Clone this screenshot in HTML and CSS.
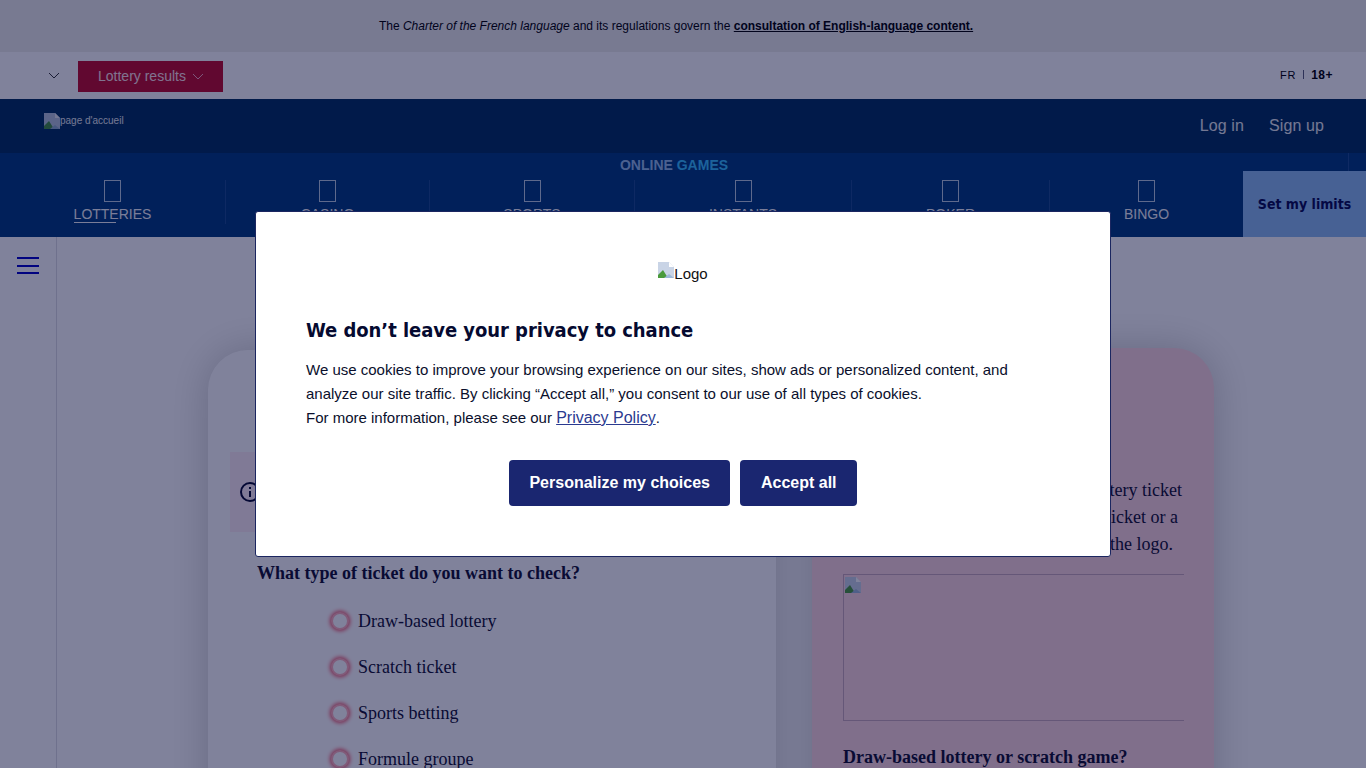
FILE: index.html
```html
<!DOCTYPE html>
<html lang="en">
<head>
    <meta charset="UTF-8">
    <meta name="viewport" content="width=device-width, initial-scale=1.0">
    <title>Check your ticket</title>
    <link rel="stylesheet" href="styles.css">
</head>
<body>
    <div class="notice">
        <p>The <em>Charter of the French language</em> and its regulations govern the <a href="#">consultation of English-language content.</a></p>
    </div>

    <div class="util-bar">
        <svg class="chevron chevron-dark" viewBox="0 0 12 7"><path d="M1 1l5 5 5-5"/></svg>
        <a class="results-button" href="#">Lottery results
            <svg class="chevron chevron-pink" viewBox="0 0 12 7"><path d="M1 1l5 5 5-5"/></svg>
        </a>
        <div class="util-right">
            <a href="#">FR</a>
            <span class="util-sep"></span>
            <strong>18+</strong>
        </div>
    </div>

    <header class="site-header">
        <a class="home-link" href="#">
            <svg class="broken-img" viewBox="0 0 16 16"><use href="#broken"/></svg>page d'accueil
        </a>
        <div class="account-links">
            <a href="#">Log in</a>
            <a href="#">Sign up</a>
        </div>
    </header>

    <nav class="games-nav">
        <div class="games-title"><span>ONLINE</span> <b>GAMES</b></div>
        <span class="title-tick"></span>
        <div class="games-row">
            <a class="game current" href="#"><i class="tofu"></i><span>LOTTERIES</span></a>
            <a class="game" href="#"><i class="tofu"></i><span>CASINO</span></a>
            <a class="game" href="#"><i class="tofu"></i><span>SPORTS</span></a>
            <a class="game" href="#"><i class="tofu"></i><span>INSTANTS</span></a>
            <a class="game" href="#"><i class="tofu"></i><span>POKER</span></a>
            <a class="game" href="#"><i class="tofu"></i><span>BINGO</span></a>
            <a class="limits" href="#">Set my limits</a>
        </div>
    </nav>

    <div class="page-body">
        <aside class="side-rail">
            <button class="burger" aria-label="Menu"><span></span><span></span><span></span></button>
        </aside>
        <main class="cards">
            <section class="card card-form">
                <div class="info-box">
                    <svg class="info-icon" viewBox="0 0 20 20">
                        <circle cx="10" cy="10" r="9"/>
                        <path d="M10 9v6M10 5v2"/>
                    </svg>
                    <span>Results are available after each draw.</span>
                </div>
                <h3>What type of ticket do you want to check?</h3>
                <ul class="ticket-types">
                    <li><i class="radio"></i>Draw-based lottery</li>
                    <li><i class="radio"></i>Scratch ticket</li>
                    <li><i class="radio"></i>Sports betting</li>
                    <li><i class="radio"></i>Formule groupe</li>
                </ul>
            </section>
            <section class="card card-help">
                <p>
                    <span class="help-line">Scan the barcode of your lottery ticket</span>
                    <span class="help-line line-two">to check a winning ticket or a</span>
                    <span class="help-line line-three">game with the logo.</span>
                </p>
                <div class="help-image">
                    <svg class="broken-img" viewBox="0 0 16 16"><use href="#broken"/></svg>
                </div>
                <h3>Draw-based lottery or scratch game?</h3>
            </section>
        </main>
    </div>

    <div class="overlay">
        <div class="cookie-modal" role="dialog">
            <div class="modal-logo">
                <svg class="broken-img" viewBox="0 0 16 16"><use href="#broken"/></svg>Logo
            </div>
            <h2>We don’t leave your privacy to chance</h2>
            <p>We use cookies to improve your browsing experience on our sites, show ads or personalized content, and analyze our site traffic. By clicking “Accept all,” you consent to our use of all types of cookies.<br>
            For more information, please see our <a href="#">Privacy Policy</a>.</p>
            <div class="modal-buttons">
                <button>Personalize my choices</button>
                <button>Accept all</button>
            </div>
        </div>
    </div>

    <svg class="icon-defs" width="0" height="0">
        <symbol id="broken" viewBox="0 0 16 16">
            <path d="M0 0h11l5 5v11H0z" fill="#c9d4e6"/>
            <path d="M11 0l5 5h-5z" fill="#fff"/>
            <path d="M0 16v-3l5-5 5 8z" fill="#4a9a3c"/>
            <path d="M6 16l5-4 5 4z" fill="#9db8d8"/>
        </symbol>
    </svg>
</body>
</html>
```

FILE: styles.css
```css
html, body {
    height: 768px;
    overflow: hidden;
}
body {
    margin: 0;
    font-family: "Liberation Sans", Arial, sans-serif;
    color: #0a0f3c;
    background-color: white;
}
a {
    color: inherit;
    text-decoration: none;
}
.icon-defs {
    position: absolute;
}
.broken-img {
    width: 16px;
    height: 16px;
    flex: none;
}

/* top notice */
.notice {
    height: 52px;
    display: flex;
    align-items: center;
    justify-content: center;
    padding-right: 14px;
    background-color: #eeeeea;
    font-size: 12px;
    color: #000;
}
.notice p {
    margin: 0;
}
.notice a {
    font-weight: bold;
    text-decoration: underline;
}

/* utility bar */
.util-bar {
    height: 47px;
    display: flex;
    align-items: center;
    padding: 0 33px 0 48px;
}
.chevron {
    width: 12px;
    height: 7px;
    fill: none;
    stroke-width: 1;
}
.chevron-dark {
    stroke: #333;
    margin-right: 18px;
}
.chevron-pink {
    stroke: #f8a8bc;
    margin-left: 6px;
}
.results-button {
    width: 145px;
    height: 31px;
    box-sizing: border-box;
    margin-top: 2px;
    padding: 0 0 1px 20px;
    display: flex;
    align-items: center;
    background-color: #c00a28;
    color: #ffe0e6;
    font-size: 14px;
}
.util-right {
    margin: -2px 0 0 auto;
    display: flex;
    align-items: center;
    gap: 7px;
    font-size: 11px;
    color: #000;
    letter-spacing: 0.7px;
}
.util-right strong {
    font-size: 12px;
    letter-spacing: 0.5px;
}
.util-sep {
    width: 1px;
    height: 9px;
    background-color: #5b5e78;
}

/* header */
.site-header {
    height: 54px;
    display: flex;
    justify-content: space-between;
    padding: 14px 42px 0 44px;
    box-sizing: border-box;
    background-color: #002f5c;
}
.home-link {
    display: flex;
    height: 16px;
    line-height: 16px;
    font-size: 10px;
    color: #fff;
    opacity: 0.9;
}
.account-links {
    display: flex;
    gap: 25px;
    font-size: 16px;
    letter-spacing: 0.1px;
    padding-top: 4px;
    color: #ffffff;
    opacity: 0.9;
}

/* games nav */
.games-nav {
    position: relative;
    height: 84px;
    background-color: #003a7c;
}
.games-title {
    height: 18px;
    text-align: center;
    font-size: 14px;
    line-height: 24px;
    font-weight: bold;
    margin-left: -18px;
}
.games-title span {
    color: #95bde8;
}
.games-title b {
    color: #36c0ff;
}
.title-tick {
    position: absolute;
    top: 0;
    left: 1348px;
    width: 1px;
    height: 18px;
    background-color: #1d4f90;
}
.games-row {
    height: 66px;
    display: grid;
    grid-template-columns: 226px 204px 205px 217px 198px 193px 123px;
}
.game {
    display: flex;
    flex-direction: column;
    align-items: center;
    align-self: start;
    margin-top: 9px;
    height: 44px;
    color: #fff;
    font-size: 14px;
    border-right: 1px solid #1d4f90;
    opacity: 0.95;
}
.game:nth-child(6) {
    border-right: none;
}
.tofu {
    display: block;
    width: 15px;
    height: 20px;
    border: 1px solid #c6d4e6;
    margin-bottom: 4px;
}
.current span {
    background: linear-gradient(#fff, #fff) left bottom / 42px 1px no-repeat;
    padding-bottom: 1px;
}
.limits {
    display: flex;
    align-items: center;
    justify-content: center;
    background-color: #8cbcf0;
    color: #060a50;
    font-family: "DejaVu Sans", Verdana, sans-serif;
    font-stretch: condensed;
    font-weight: bold;
    font-size: 14px;
    white-space: nowrap;
}

/* page body */
.page-body {
    display: flex;
    height: 531px;
    overflow: hidden;
}
.side-rail {
    width: 56px;
    flex: none;
    border-right: 1px solid #dcdde2;
}
.burger {
    display: flex;
    flex-direction: column;
    gap: 5.5px;
    margin: 20px 0 0 17px;
    padding: 0;
    border: none;
    background: none;
}
.burger span {
    display: block;
    width: 22px;
    height: 2px;
    background-color: #0000c8;
}
.cards {
    flex: 1;
    display: flex;
    align-items: flex-start;
    gap: 36px;
    padding: 111px 0 0 151px;
}
.card {
    border-radius: 40px 40px 0 0;
    box-shadow: 0 0 40px rgba(0, 0, 0, 0.2);
    font-family: "Liberation Serif", "Times New Roman", serif;
    font-size: 18px;
    color: #101030;
}
.card h3 {
    margin: 0;
    font-size: 18px;
    line-height: 27px;
}
.card-form {
    width: 568px;
    height: 500px;
    margin-top: 2px;
    padding: 102px 0 0 22px;
    box-sizing: border-box;
    background-color: white;
}
.info-box {
    height: 80px;
    display: flex;
    align-items: center;
    gap: 10px;
    padding-left: 10px;
    margin-right: 22px;
    background-color: #ffeef4;
}
.info-icon {
    width: 20px;
    height: 20px;
    flex: none;
    fill: none;
    stroke: #060a30;
    stroke-width: 2;
}
.card-form h3 {
    margin: 28px 0 0 27px;
}
.ticket-types {
    list-style: none;
    margin: 11px 0 0 101px;
    padding: 0;
}
.ticket-types li {
    display: flex;
    align-items: center;
    gap: 9px;
    height: 46px;
}
.radio {
    width: 18px;
    height: 18px;
    box-sizing: border-box;
    flex: none;
    border: 2px solid #ffb0bb;
    border-radius: 50%;
    background-color: white;
    box-shadow: 0 0 4px 1px #f0405a;
}
.card-help {
    width: 402px;
    height: 500px;
    padding: 129px 30px 0 31px;
    box-sizing: border-box;
    background-color: #ffd8de;
}
.card-help p {
    margin: 0;
    line-height: 27px;
    text-align: right;
    margin-right: 2px;
}
.help-line {
    display: block;
}
.line-two {
    padding-right: 4px;
}
.line-three {
    padding-right: 9px;
}
.help-image {
    width: 341px;
    height: 147px;
    box-sizing: border-box;
    margin-top: 16px;
    padding: 2px 0 0 1px;
    border: 1px solid #c8a8b8;
    border-right: none;
}
.card-help h3 {
    margin-top: 23px;
    white-space: nowrap;
}

/* cookie dialog */
.overlay {
    position: fixed;
    inset: 0;
    display: flex;
    align-items: center;
    justify-content: center;
    background-color: rgba(1, 6, 56, 0.5);
}
.cookie-modal {
    width: 856px;
    height: 346px;
    box-sizing: border-box;
    padding: 50px 50px 0;
    background-color: white;
    border: 1px solid #1b2660;
    border-radius: 3px;
    color: #0a0f2c;
}
.modal-logo {
    display: flex;
    justify-content: center;
    height: 24px;
    font-size: 15px;
    line-height: 23px;
    color: #111;
}
.cookie-modal h2 {
    margin: 29px 0 0;
    font-family: "DejaVu Sans", Verdana, sans-serif;
    font-stretch: condensed;
    font-size: 20px;
    letter-spacing: -0.05px;
    line-height: 30px;
    color: #050a30;
}
.cookie-modal p {
    margin: 13px 0 0;
    font-size: 15px;
    line-height: 24px;
}
.cookie-modal p a {
    color: #2b3a8f;
    font-size: 16px;
    text-decoration: underline;
}
.modal-buttons {
    display: flex;
    justify-content: center;
    gap: 10px;
    margin-top: 30px;
}
.modal-buttons button {
    height: 46px;
    padding: 0 20.5px;
    border: none;
    border-radius: 4px;
    background-color: #1a2670;
    color: white;
    font-family: "Liberation Sans", Arial, sans-serif;
    font-size: 16px;
    font-weight: bold;
}
```
